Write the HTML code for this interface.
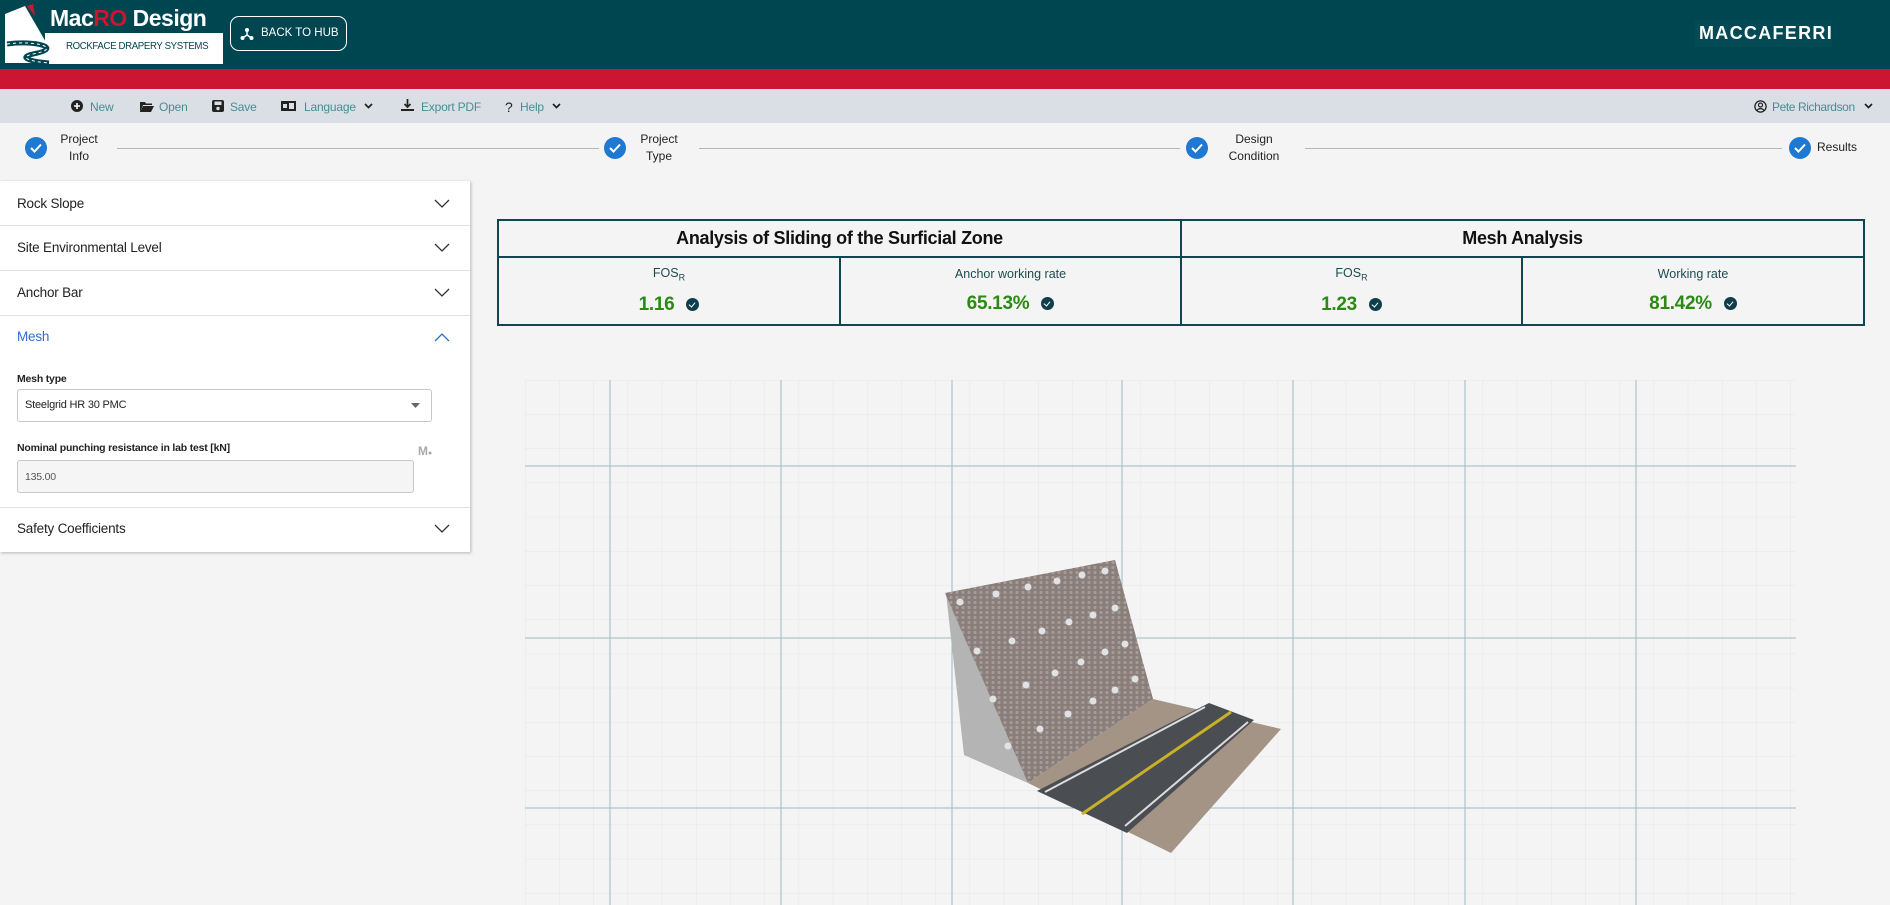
<!DOCTYPE html>
<html><head><meta charset="utf-8"><style>
*{box-sizing:border-box;margin:0;padding:0}
body{width:1890px;height:905px;overflow:hidden;background:#f4f4f4;font-family:"Liberation Sans",sans-serif;position:relative}
.abs{position:absolute}
.hdr{left:0;top:0;width:1890px;height:69px;background:#004651}
.red{left:0;top:69px;width:1890px;height:20px;background:#cc1433}
.tb{left:0;top:89px;width:1890px;height:34px;background:#d9dfe4}
.ti{position:absolute;top:100px;font-size:12px;color:#4a8c96;letter-spacing:-0.2px}
.ic{position:absolute;top:99px;font-size:13px;color:#222}
.step{position:absolute;width:22px;height:22px;border-radius:50%;background:#1f78d1;top:137px}
.step svg{position:absolute;left:5px;top:6px}
.sl{position:absolute;font-size:12px;color:#222;text-align:center;line-height:17px}
.ln{position:absolute;height:1px;background:#b5b5b5;top:148px}
.panel{left:0;top:181px;width:470px;height:371px;background:#fff;box-shadow:1px 1px 3px rgba(0,0,0,.25)}
.row{position:absolute;left:17px;font-size:13.5px;color:#222;letter-spacing:-0.2px}
.div{position:absolute;left:0;width:470px;height:1px;background:#e2e2e2}
.chev{position:absolute;left:434px}
table{position:absolute;left:497px;top:219px;width:1368px;height:107px;border-collapse:collapse}
td{border:2px solid #0f4650;text-align:center;color:#1d4a52}
.h{font-weight:bold;font-size:18px;color:#111;height:37px;letter-spacing:-0.3px}
.lab{font-size:12.5px;display:block;margin-top:0px}
.val{display:block;margin-top:12px;font-size:19px;font-weight:bold;color:#2a8a12;letter-spacing:-0.3px}
.ck{display:inline-block;width:13px;height:13px;border-radius:50%;background:#0f3e4b;margin-left:12px;vertical-align:-1px;position:relative}
.ck:after{content:"";position:absolute;left:4px;top:3px;width:3px;height:5px;border:solid #fff;border-width:0 1.5px 1.5px 0;transform:rotate(40deg)}
</style></head><body>
<div class="abs hdr"></div>
<div class="abs red"></div>
<div class="abs tb"></div>
<!-- logo -->
<svg class="abs" style="left:5px;top:4px" width="218" height="60">
<polygon points="0,10 20,2 42,40 55,59 0,59" fill="#fff"/>
<rect x="40" y="29" width="178" height="31" fill="#fff"/>
<path d="M2,40 C30,36 60,44 28,50 C10,54 30,58 44,59" stroke="#004651" stroke-width="5" fill="none"/>
<path d="M2,40 C30,36 60,44 28,50 C10,54 30,58 44,59" stroke="#fff" stroke-width="1" fill="none" stroke-dasharray="3 3"/>
<polygon points="22,2 28,0 30,12" fill="#cc1433"/>
</svg>
<div class="abs" style="left:50px;top:5px;font-size:23px;color:#fff;font-weight:bold;letter-spacing:-0.5px">Mac<span style="color:#cc1433">RO</span> Design</div>
<div class="abs" style="left:66px;top:40px;font-size:10.5px;color:#004651;letter-spacing:-0.4px;transform:scaleX(0.92);transform-origin:left">ROCKFACE DRAPERY SYSTEMS</div>
<div class="abs" style="left:230px;top:16px;width:117px;height:35px;border:1.5px solid #fff;border-radius:9px;color:#fff;font-size:11.5px;line-height:32px;padding-left:30px">BACK TO HUB</div>
<svg class="abs" style="left:240px;top:27px" width="14" height="14"><circle cx="7" cy="3" r="2" fill="#fff"/><circle cx="2.5" cy="11" r="2" fill="#fff"/><circle cx="11.5" cy="11" r="2" fill="#fff"/><path d="M7,4V8L2.5,11M7,8L11.5,11" stroke="#fff" stroke-width="1.5" fill="none"/></svg>
<div class="abs" style="left:1695px;top:20px;width:137px;height:27px;background:#034a55"></div>
<div class="abs" style="left:1699px;top:23px;font-size:18px;font-weight:bold;color:#fff;letter-spacing:1.3px">MACCAFERRI</div>
<!-- toolbar -->
<svg class="abs" style="left:71px;top:100px" width="12" height="12"><circle cx="6" cy="6" r="6" fill="#222"/><path d="M6,3V9M3,6H9" stroke="#fff" stroke-width="1.6"/></svg>
<div class="ti" style="left:90px">New</div>
<svg class="abs" style="left:140px;top:101px" width="14" height="11"><path d="M0,1H5L6,2.5H12V4H3L0,11Z M3,5H14L11,11H0Z" fill="#222"/></svg>
<div class="ti" style="left:159px">Open</div>
<svg class="abs" style="left:212px;top:100px" width="12" height="12"><rect width="12" height="12" rx="2" fill="#222"/><rect x="2.5" y="1.5" width="7" height="3.5" fill="#d9dfe4"/><circle cx="6" cy="8.5" r="1.7" fill="#d9dfe4"/></svg>
<div class="ti" style="left:230px">Save</div>
<svg class="abs" style="left:281px;top:101px" width="15" height="10"><rect width="15" height="10" fill="#222"/><rect x="8" y="2" width="5" height="6" fill="#d9dfe4"/><rect x="2" y="3" width="4" height="4" fill="#d9dfe4"/></svg>
<div class="ti" style="left:304px">Language</div>
<svg class="abs" style="left:364px;top:103px" width="9" height="6"><path d="M1,1L4.5,4.5L8,1" stroke="#222" stroke-width="1.7" fill="none"/></svg>
<svg class="abs" style="left:401px;top:99px" width="13" height="13"><path d="M6.5,0V8M3.5,5L6.5,8L9.5,5" stroke="#222" stroke-width="1.7" fill="none"/><path d="M0,11H13" stroke="#222" stroke-width="2"/></svg>
<div class="ti" style="left:421px">Export PDF</div>
<div class="ic" style="left:505px;font-size:14px">?</div>
<div class="ti" style="left:520px">Help</div>
<svg class="abs" style="left:552px;top:103px" width="9" height="6"><path d="M1,1L4.5,4.5L8,1" stroke="#222" stroke-width="1.7" fill="none"/></svg>
<svg class="abs" style="left:1754px;top:100px" width="13" height="13"><circle cx="6.5" cy="6.5" r="5.6" stroke="#222" stroke-width="1.3" fill="none"/><circle cx="6.5" cy="5" r="2" stroke="#222" stroke-width="1.2" fill="none"/><path d="M3,10.5C4.5,8 8.5,8 10,10.5" stroke="#222" stroke-width="1.2" fill="none"/></svg>
<div class="ti" style="left:1772px;letter-spacing:-0.4px">Pete Richardson</div>
<svg class="abs" style="left:1864px;top:103px" width="9" height="6"><path d="M1,1L4.5,4.5L8,1" stroke="#222" stroke-width="1.7" fill="none"/></svg>
<!-- stepper -->
<div class="step" style="left:25px"><svg width="12" height="10"><path d="M1,5L4.5,8.5L11,1.5" stroke="#fff" stroke-width="2" fill="none"/></svg></div>
<div class="sl" style="left:50px;top:131px;width:58px">Project<br>Info</div>
<div class="ln" style="left:117px;width:482px"></div>
<div class="step" style="left:604px"><svg width="12" height="10"><path d="M1,5L4.5,8.5L11,1.5" stroke="#fff" stroke-width="2" fill="none"/></svg></div>
<div class="sl" style="left:630px;top:131px;width:58px">Project<br>Type</div>
<div class="ln" style="left:699px;width:481px"></div>
<div class="step" style="left:1186px"><svg width="12" height="10"><path d="M1,5L4.5,8.5L11,1.5" stroke="#fff" stroke-width="2" fill="none"/></svg></div>
<div class="sl" style="left:1220px;top:131px;width:68px">Design<br>Condition</div>
<div class="ln" style="left:1305px;width:477px"></div>
<div class="step" style="left:1789px"><svg width="12" height="10"><path d="M1,5L4.5,8.5L11,1.5" stroke="#fff" stroke-width="2" fill="none"/></svg></div>
<div class="sl" style="left:1817px;top:139px">Results</div>
<!-- panel -->
<div class="abs panel"></div>
<div class="row" style="top:196px">Rock Slope</div>
<div class="div" style="top:225px"></div>
<div class="row" style="top:240px">Site Environmental Level</div>
<div class="div" style="top:270px"></div>
<div class="row" style="top:285px">Anchor Bar</div>
<div class="div" style="top:315px"></div>
<div class="row" style="top:329px;color:#2a6fd0">Mesh</div>
<div class="row" style="top:373px;font-size:10.5px;font-weight:bold">Mesh type</div>
<div class="abs" style="left:17px;top:389px;width:415px;height:33px;border:1px solid #c8c8c8;border-radius:3px;background:#fff"></div>
<div class="row" style="left:25px;top:399px;font-size:11px">Steelgrid HR 30 PMC</div>
<svg class="abs" style="left:411px;top:403px" width="9" height="5"><path d="M0,0H9L4.5,5Z" fill="#666"/></svg>
<div class="row" style="top:442px;font-size:10.5px;font-weight:bold">Nominal punching resistance in lab test [kN]</div>
<div class="abs" style="left:418px;top:444px;font-size:12px;font-weight:bold;color:#aaa">M<span style="font-size:7px">●</span></div>
<div class="abs" style="left:17px;top:460px;width:397px;height:33px;border:1px solid #c8c8c8;border-radius:3px;background:#f5f5f5"></div>
<div class="row" style="left:25px;top:471px;font-size:10.5px;color:#555">135.00</div>
<div class="div" style="top:507px"></div>
<div class="row" style="top:521px">Safety Coefficients</div>
<svg class="chev" style="top:199px" width="16" height="9"><path d="M1,1L8,8L15,1" stroke="#333" stroke-width="1.3" fill="none"/></svg>
<svg class="chev" style="top:243px" width="16" height="9"><path d="M1,1L8,8L15,1" stroke="#333" stroke-width="1.3" fill="none"/></svg>
<svg class="chev" style="top:288px" width="16" height="9"><path d="M1,1L8,8L15,1" stroke="#333" stroke-width="1.3" fill="none"/></svg>
<svg class="chev" style="top:333px" width="16" height="9"><path d="M1,8L8,1L15,8" stroke="#2a6fd0" stroke-width="1.3" fill="none"/></svg>
<svg class="chev" style="top:524px" width="16" height="9"><path d="M1,1L8,8L15,1" stroke="#333" stroke-width="1.3" fill="none"/></svg>
<!-- table -->
<table>
<tr><td class="h" colspan="2">Analysis of Sliding of the Surficial Zone</td><td class="h" colspan="2">Mesh Analysis</td></tr>
<tr>
<td style="width:342px"><span class="lab">FOS<sub style="font-size:9px">R</sub></span><span class="val">1.16<i class="ck"></i></span></td>
<td style="width:341px"><span class="lab">Anchor working rate</span><span class="val">65.13%<i class="ck"></i></span></td>
<td style="width:341px"><span class="lab">FOS<sub style="font-size:9px">R</sub></span><span class="val">1.23<i class="ck"></i></span></td>
<td><span class="lab">Working rate</span><span class="val">81.42%<i class="ck"></i></span></td>
</tr></table>
<!-- grid + model -->
<svg class="abs" style="left:0;top:0" width="1890" height="905">
<defs>
<pattern id="mn" x="525" y="380" width="34.2" height="34.2" patternUnits="userSpaceOnUse"><path d="M0,0V34.2M0,0H34.2" stroke="#e3e7e7" stroke-width="1" fill="none"/></pattern>
<pattern id="mesh" width="6" height="5" patternUnits="userSpaceOnUse"><rect width="6" height="5" fill="#8a7e7a"/><circle cx="3" cy="2.5" r="1.6" fill="#b4aaa6"/></pattern>
</defs>
<rect x="525" y="380" width="1271" height="525" fill="url(#mn)"/>
<g stroke="#9dbcc0" stroke-width="1">
<path d="M610,380V905M781,380V905M952,380V905M1122,380V905M1293,380V905M1465,380V905M1636,380V905"/>
<path d="M525,466H1796M525,638H1796M525,808H1796"/>
</g>
<polygon points="946,593 958,605 1028,783 964,755" fill="#b4b4b4"/>
<polygon points="945,593 1115,560 1153,699 1028,783" fill="url(#mesh)"/>
<polygon points="945,593 1115,560 1153,699 1028,783" fill="#8a7e7a" opacity="0.35"/>
<polygon points="1028,783 1153,699 1281,729 1171,853" fill="#a39486"/>
<polygon points="1037,791 1209,703 1254,720 1127,833" fill="#4a4d52"/>
<path d="M1045,792L1205,707" stroke="#dcdcdc" stroke-width="2"/>
<path d="M1082,814L1231,712" stroke="#c9b02a" stroke-width="3"/>
<path d="M1125,826L1248,722" stroke="#dcdcdc" stroke-width="2"/>
<g fill="#e0e2e6">
<circle cx="960" cy="602" r="3.5"/><circle cx="996" cy="594" r="3.5"/><circle cx="1028" cy="587" r="3.5"/><circle cx="1057" cy="581" r="3.5"/><circle cx="1082" cy="575" r="3.5"/><circle cx="1105" cy="571" r="3.5"/>
<circle cx="1115" cy="608" r="3.5"/><circle cx="1093" cy="615" r="3.5"/><circle cx="1069" cy="622" r="3.5"/><circle cx="1042" cy="631" r="3.5"/><circle cx="1012" cy="641" r="3.5"/><circle cx="977" cy="651" r="3.5"/>
<circle cx="1125" cy="644" r="3.5"/><circle cx="1105" cy="652" r="3.5"/><circle cx="1081" cy="662" r="3.5"/><circle cx="1055" cy="673" r="3.5"/><circle cx="1026" cy="685" r="3.5"/><circle cx="993" cy="699" r="3.5"/>
<circle cx="1135" cy="679" r="3.5"/><circle cx="1115" cy="690" r="3.5"/><circle cx="1093" cy="701" r="3.5"/><circle cx="1068" cy="714" r="3.5"/><circle cx="1040" cy="729" r="3.5"/><circle cx="1008" cy="746" r="3.5"/>
</g>
</svg>
</body></html>
